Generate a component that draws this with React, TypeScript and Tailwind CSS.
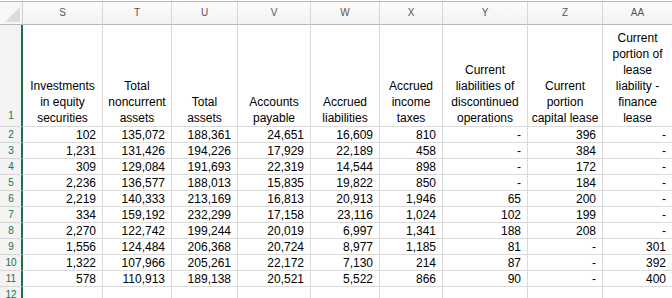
import React from 'react';

const letters = ['S', 'T', 'U', 'V', 'W', 'X', 'Y', 'Z', 'AA'];

const titles: string[][] = [
  ['Investments', 'in equity', 'securities'],
  ['Total', 'noncurrent', 'assets'],
  ['Total', 'assets'],
  ['Accounts', 'payable'],
  ['Accrued', 'liabilities'],
  ['Accrued', 'income', 'taxes'],
  ['Current', 'liabilities of', 'discontinued', 'operations'],
  ['Current', 'portion', 'capital lease'],
  ['Current', 'portion of', 'lease', 'liability -', 'finance', 'lease'],
];

const rows: string[][] = [
  ['102', '135,072', '188,361', '24,651', '16,609', '810', '-', '396', '-'],
  ['1,231', '131,426', '194,226', '17,929', '22,189', '458', '-', '384', '-'],
  ['309', '129,084', '191,693', '22,319', '14,544', '898', '-', '172', '-'],
  ['2,236', '136,577', '188,013', '15,835', '19,822', '850', '-', '184', '-'],
  ['2,219', '140,333', '213,169', '16,813', '20,913', '1,946', '65', '200', '-'],
  ['334', '159,192', '232,299', '17,158', '23,116', '1,024', '102', '199', '-'],
  ['2,270', '122,742', '199,244', '20,019', '6,997', '1,341', '188', '208', '-'],
  ['1,556', '124,484', '206,368', '20,724', '8,977', '1,185', '81', '-', '301'],
  ['1,322', '107,966', '205,261', '22,172', '7,130', '214', '87', '-', '392'],
  ['578', '110,913', '189,138', '20,521', '5,522', '866', '90', '-', '400'],
];

const rowHeadClass =
  'flex items-center justify-center border-r-2 border-b border-r-[#1e7145] border-b-[#d6d6d6] bg-[#f3f3f3] pl-[1px] text-[10px] text-[#1e7145]';
const cellClass = 'border-r border-b border-[#dadada] bg-white';

export default function App() {
  return (
    <div className="h-[298px] w-[672px] overflow-hidden bg-white pt-px font-['Liberation_Sans',Arial,sans-serif] text-[12px] leading-4 text-black">
      <div className="grid grid-cols-[23px_80px_69px_66px_73px_69px_63px_85px_75px_70px] grid-rows-[23px_102px_repeat(11,16px)] border-t border-[#b9b9b9]">
        {/* column letters */}
        <div className="relative border-r border-b border-r-[#cfcfcf] border-b-[#b9b9b9] bg-[#f7f7f7]">
          <svg className="absolute left-[5px] top-[5px]" width="15" height="15" viewBox="0 0 15 15">
            <polygon points="15,0 15,15 0,15" fill="#dcdcdc" />
          </svg>
        </div>
        {letters.map((l) => (
          <div
            key={l}
            className="flex items-center justify-center border-r border-b border-r-[#d6d6d6] border-b-[#b9b9b9] bg-gradient-to-b from-[#fbfbfb] to-[#f3f3f3] text-[10px] text-[#555]"
          >
            {l}
          </div>
        ))}

        {/* row 1: titles */}
        <div className={`${rowHeadClass} !items-end pb-[2px]`}>1</div>
        {titles.map((t, i) => (
          <div key={i} className={`${cellClass} flex flex-col items-center justify-end text-center`}>
            {t.map((line) => (
              <span key={line} className="whitespace-nowrap">
                {line}
              </span>
            ))}
          </div>
        ))}

        {/* data rows */}
        {rows.map((r, ri) => (
          <React.Fragment key={ri}>
            <div className={rowHeadClass}>{ri + 2}</div>
            {r.map((v, ci) => (
              <div key={ci} className={`${cellClass} whitespace-nowrap pr-[6px] text-right`}>
                {v}
              </div>
            ))}
          </React.Fragment>
        ))}

        {/* row 12 */}
        <div className={rowHeadClass}>12</div>
        {letters.map((l) => (
          <div key={l} className={cellClass} />
        ))}
      </div>
    </div>
  );
}
